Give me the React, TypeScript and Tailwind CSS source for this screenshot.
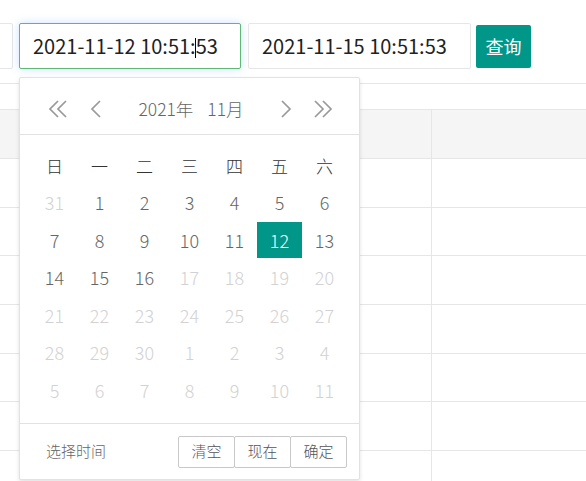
import React from 'react'

const font = "font-['Noto_Sans_CJK_SC','Microsoft_YaHei',sans-serif]"

const weekdays = ['日', '一', '二', '三', '四', '五', '六']

// [label, state] : 0 = current month, 1 = muted, 2 = selected
const weeks: [string, number][][] = [
  [['31', 1], ['1', 0], ['2', 0], ['3', 0], ['4', 0], ['5', 0], ['6', 0]],
  [['7', 0], ['8', 0], ['9', 0], ['10', 0], ['11', 0], ['12', 2], ['13', 0]],
  [['14', 0], ['15', 0], ['16', 0], ['17', 1], ['18', 1], ['19', 1], ['20', 1]],
  [['21', 1], ['22', 1], ['23', 1], ['24', 1], ['25', 1], ['26', 1], ['27', 1]],
  [['28', 1], ['29', 1], ['30', 1], ['1', 1], ['2', 1], ['3', 1], ['4', 1]],
  [['5', 1], ['6', 1], ['7', 1], ['8', 1], ['9', 1], ['10', 1], ['11', 1]],
]

function Chevron({ dir, double }: { dir: 'l' | 'r'; double?: boolean }) {
  const w = double ? 20 : 11
  const paths =
    dir === 'l'
      ? double
        ? 'M10 1 L2 9 L10 17 M18 1 L10 9 L18 17'
        : 'M10 1 L2 9 L10 17'
      : double
        ? 'M2 1 L10 9 L2 17 M10 1 L18 9 L10 17'
        : 'M1 1 L9 9 L1 17'
  return (
    <svg width={w} height={18} viewBox={`0 0 ${w} 18`} fill="none">
      <path d={paths} stroke="#999" strokeWidth={1.7} strokeLinejoin="miter" />
    </svg>
  )
}

function DatePanel() {
  return (
    <div className="absolute left-[19px] top-[77px] flex h-[403px] w-[341px] flex-col rounded-[2px] border border-[#e2e2e2] bg-white shadow-[0_2px_4px_rgba(0,0,0,0.12)]">
      <div className="flex h-[57px] shrink-0 items-center border-b border-[#e2e2e2] pl-[28px] pr-[26px] pt-[6px]">
        <Chevron dir="l" double />
        <span className="ml-[22px] flex">
          <Chevron dir="l" />
        </span>
        <div className="flex flex-1 items-center justify-center gap-[14px] text-[17.5px] font-light text-[#666]">
          <span>2021年</span>
          <span>11月</span>
        </div>
        <span className="mr-[21px] flex">
          <Chevron dir="r" />
        </span>
        <Chevron dir="r" double />
      </div>

      <div className="h-[289px] shrink-0 border-b border-[#e2e2e2] px-[12px] pt-[11.5px]">
        <div className="grid grid-cols-7 font-light">
          {weekdays.map((d) => (
            <div key={d} className="flex h-[37.5px] items-center justify-center text-[17px] text-[#333]">
              {d}
            </div>
          ))}
          {weeks.flat().map(([n, s], i) => (
            <div key={i} className="flex h-[37.5px] items-center justify-center">
              <span
                className={
                  s === 2
                    ? 'flex h-[36px] w-[45px] items-center justify-center bg-[#009688] text-[18px] text-white'
                    : s === 1
                      ? 'text-[18px] text-[#d2d2d2]'
                      : 'text-[18px] text-[#666]'
                }
              >
                {n}
              </span>
            </div>
          ))}
        </div>
      </div>

      <div className="flex flex-1 items-center justify-between pl-[26px] pr-[12px]">
        <span className="text-[15px] font-light text-[#666]">选择时间</span>
        <div className="flex">
          {['清空', '现在', '确定'].map((b, i) => (
            <span
              key={b}
              className={
                'flex h-[32px] w-[57px] items-center justify-center rounded-[2px] border border-[#c9c9c9] text-[15px] font-light text-[#555] ' +
                (i > 0 ? '-ml-px' : '')
              }
            >
              {b}
            </span>
          ))}
        </div>
      </div>
    </div>
  )
}

export default function App() {
  return (
    <div className={`${font} relative h-[481px] w-[586px] overflow-hidden bg-white`}>
      <div className="flex h-[84px] items-start border-b border-[#e6e6e6] pt-[23px]">
        <div className="-ml-[7px] h-[46px] w-[20px] rounded-[2px] border border-[#e6e6e6]" />
        <div className="ml-[6px] flex h-[46px] w-[222px] items-center rounded-[2px] border border-[#5fb878] pl-[13px] text-[20px] text-[#222] shadow-[0_0_8px_rgba(60,150,255,0.28)]">
          <span>
            2021-11-12 10:51:
            <span className="-mx-[0.5px] inline-block h-[20px] w-px bg-black align-[-4px]" />
            53
          </span>
        </div>
        <div className="ml-[7px] flex h-[46px] w-[223px] items-center rounded-[2px] border border-[#e6e6e6] pl-[13px] text-[20px] text-[#222]">
          2021-11-15 10:51:53
        </div>
        <div className="ml-[5px] mt-[2px] flex h-[43px] w-[55px] items-center justify-center rounded-[2px] bg-[#009688] text-[18px] text-white">
          查询
        </div>
      </div>

      <div className="mt-[25px] border-t border-[#e6e6e6]">
        <div className="flex h-[49px] border-b border-[#e6e6e6] bg-[#f5f5f5]">
          <div className="w-[432px] border-r border-[#e6e6e6]" />
          <div className="flex-1" />
        </div>
        {[0, 1, 2, 3, 4, 5, 6].map((r) => (
          <div key={r} className="flex h-[48.7px] border-b border-[#e6e6e6]">
            <div className="w-[432px] border-r border-[#e6e6e6]" />
            <div className="flex-1" />
          </div>
        ))}
      </div>

      <DatePanel />
    </div>
  )
}
